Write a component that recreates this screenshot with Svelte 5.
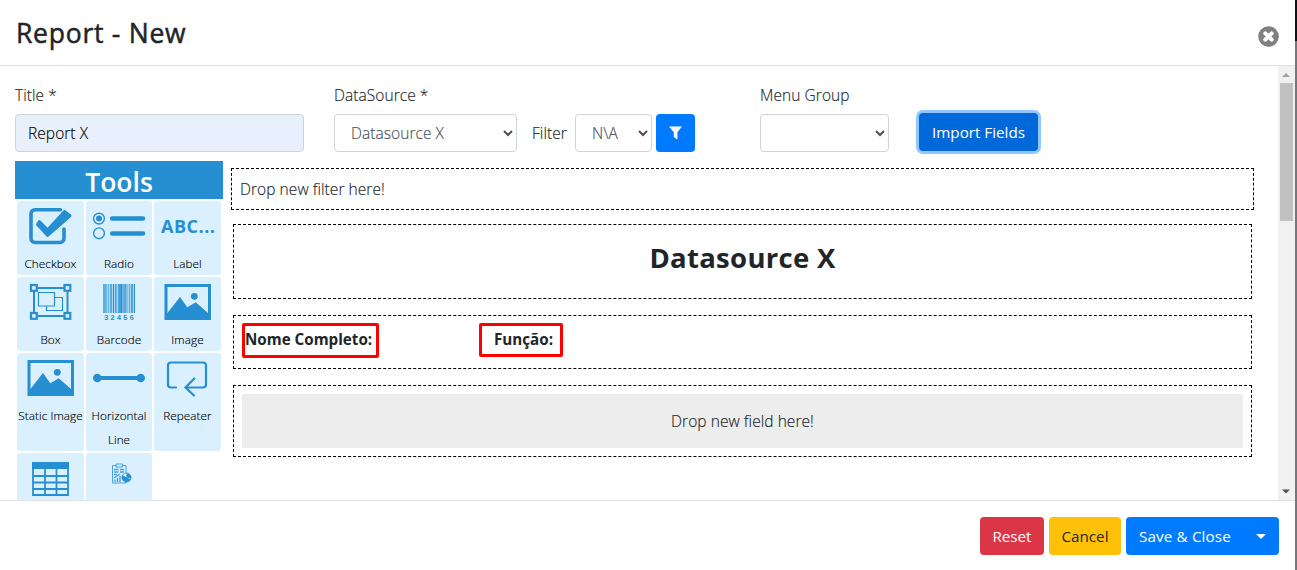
<script>
  const tools = [
    { id: 'check', label: 'Checkbox' },
    { id: 'radio', label: 'Radio' },
    { id: 'label', label: 'Label' },
    { id: 'box', label: 'Box' },
    { id: 'barcode', label: 'Barcode' },
    { id: 'image', label: 'Image' },
    { id: 'image', label: 'Static Image' },
    { id: 'line', label: 'Horizontal Line' },
    { id: 'repeat', label: 'Repeater' },
    { id: 'table' },
    { id: 'report' }
  ];
  const corners = [[14, 8], [47.5, 8], [14, 36], [47.5, 36]];
  const bars = [
    [17, 2, 0.6], [19, 2, 0.5], [22, 1, 0.5], [24, 2, 0.6], [27, 1, 1], [29, 1, 0.7], [30, 1, 0.4],
    [32, 3, 0.75], [35, 1, 1], [36, 2, 0.45], [38, 2, 0.65], [40, 2, 0.3], [43, 1, 0.6], [45, 2, 0.7], [48, 1, 1]
  ];
</script>

<div class="stage">
  <div class="modal">
    <header>
      <h4>Report - New</h4>
      <svg class="close" width="21" height="21" viewBox="0 0 21 21">
        <circle cx="10.5" cy="10.5" r="10.3" fill="#808080" />
        <path d="M7.3 7.3l6.4 6.4M13.7 7.3l-6.4 6.4" stroke="#fff" stroke-width="4" stroke-linecap="round" />
      </svg>
    </header>

    <div class="body">
      <div class="content">
        <div class="form">
          <div class="field title"><span class="lbl">Title *</span><input value="Report X" /></div>
          <div class="field source"><span class="lbl">DataSource *</span><select><option>Datasource X</option></select></div>
          <span class="filter">Filter</span>
          <select class="na"><option>N\A</option></select>
          <button class="btn primary funnel" aria-label="Filter">
            <svg width="13" height="14" viewBox="0 0 13 14"><path d="M0 .5h13L8.4 6.2V13.5L4.8 11V6.2z" fill="#fff" /></svg>
          </button>
          <div class="field group"><span class="lbl">Menu Group</span><select><option></option></select></div>
          <button class="btn import">Import Fields</button>
        </div>

        <div class="work">
          <aside>
            <h3>Tools</h3>
            <div class="tools">
              {#each tools as t}
                <div class="tool">
                  <svg width="67" height="50" viewBox="0 0 67 50" fill="none" stroke="#268fd2">
                    {#if t.id === 'check'}
                      <path d="M43.500 8.700H18a4 4 0 0 0-4 4V37.500a4 4 0 0 0 4 4H43a4 4 0 0 0 4-4V28" stroke-width="3.600" stroke-linecap="round" />
                      <path d="M22.300 20.500L30.700 28.700L47.500 10.500L53 14.800L30.700 34.500L20.500 23.500z" fill="#268fd2" stroke-width="3" stroke-linejoin="round" />
                    {:else if t.id === 'radio'}
                      <circle cx="13" cy="17.600" r="5.400" stroke-width="1.400" />
                      <circle cx="13" cy="17.600" r="3" fill="#268fd2" stroke="none" />
                      <circle cx="13" cy="32.300" r="5.400" stroke-width="1.400" />
                      <path d="M26.200 17.500H57M26.200 32.500H57" stroke-width="4.600" stroke-linecap="round" />
                    {:else if t.id === 'label'}
                      <text class="abc" x="7" y="31.700" textLength="54">ABC...</text>
                    {:else if t.id === 'box'}
                      <path d="M17 11H50.500V39H17z" stroke-width="2" />
                      {#each corners as [x, y]}
                        <rect {x} {y} width="5.800" height="5.800" fill="#daf0ff" stroke-width="2.200" />
                      {/each}
                      <path d="M21.500 15.500h16v13.500h-16zM37.500 20.500h8v13h-16v-4.500" stroke-width="1.200" />
                    {:else if t.id === 'barcode'}
                      <rect x="17" y="7" width="32" height="29" fill="#268fd2" fill-opacity=".25" stroke="none" />
                      {#each bars as [x, w, o]}
                        <rect {x} y="7" width={w} height="29" fill="#268fd2" fill-opacity={o} stroke="none" />
                      {/each}
                      <text class="digits" x="18" y="42.700" textLength="30">32456</text>
                    {:else if t.id === 'image'}
                      <rect x="12" y="8.500" width="43.500" height="33" stroke-width="3" />
                      <circle cx="40.300" cy="19.300" r="3.400" fill="#268fd2" stroke="none" />
                      <path d="M13 36.500L26 20l7.300 10.300 8.400-5L54 36v7H13z" fill="#268fd2" stroke="none" />
                    {:else if t.id === 'line'}
                      <path d="M11 25H55" stroke-width="4" />
                      <circle cx="11.300" cy="25" r="4.300" fill="#268fd2" stroke="none" />
                      <circle cx="54.700" cy="25" r="4.300" fill="#268fd2" stroke="none" />
                    {:else if t.id === 'repeat'}
                      <path d="M22 34.500h-5a3 3 0 0 1-3-3V12.500a3 3 0 0 1 3-3H49a3 3 0 0 1 3 3V31.500a3 3 0 0 1-3 3H32M40.300 25.500L31.500 34.500l8.500 8" stroke-width="2.200" stroke-linecap="round" />
                    {:else if t.id === 'table'}
                      <path d="M16 10H51V42H16zM28 16V42M39.500 16V42M16 23H51M16 29.500H51M16 36H51" stroke-width="1.800" />
                      <rect x="15" y="9" width="37" height="7" fill="#268fd2" stroke="none" />
                    {:else}
                      <path d="M30 12.500h-3.500v17.500H40V12.500h-3.500M30 11h6.500v3H30z" stroke-opacity=".8" />
                      <path d="M28 16.500h4.500M28 19h4.500M28 21.500h3M34 16.500h4M34 19h4M29 29v-2.500M31.500 29v-4M34 29v-6M28 25l6-4" stroke-width="1.400" stroke-opacity=".8" />
                      <circle cx="40.500" cy="24.500" r="4.600" fill="#daf0ff" stroke-opacity=".7" />
                      <path d="M36.500 22l4 2.500 4.300 2A4.700 4.700 0 0 1 36.500 22zM40.500 24.500V20a4.600 4.600 0 0 1 4.500 5.500z" fill="#268fd2" stroke="none" />
                    {/if}
                  </svg>
                  {#if t.label}<span class={t.id}>{t.label}</span>{/if}
                </div>
              {/each}
            </div>
          </aside>

          <section>
            <div class="drop-filter"><span>Drop new filter here!</span></div>
            <div class="band heading"><h3><b>Datasource X</b></h3></div>
            <div class="band fields">
              <div class="cell first"><b>Nome Completo:</b><i class="mark"></i></div>
              <div class="cell second"><b>Função:</b><i class="mark"></i></div>
            </div>
            <div class="band detail"><div class="drop"><span>Drop new field here!</span></div></div>
          </section>
        </div>
      </div>

      <div class="scrollbar">
        <svg width="16" height="17" viewBox="0 0 16 17"><path d="M4 11l4-4 4 4z" fill="#a3a3a3" /></svg>
        <div class="thumb"></div>
        <svg width="16" height="17" viewBox="0 0 16 17"><path d="M4 6.500h8l-4 4z" fill="#505050" /></svg>
      </div>
    </div>

    <footer>
      <button class="btn reset">Reset</button>
      <button class="btn cancel">Cancel</button>
      <button class="btn primary save"><span>Save &amp; Close</span><svg width="10" height="5" viewBox="0 0 10 5"><path d="M0 0h10L5 5z" fill="#fff" /></svg></button>
    </footer>
  </div>
  <div class="behind"></div>
</div>

<style>
  :global(body) { overflow: hidden; background: #fff; }
  * { box-sizing: border-box; }
  .stage {
    display: flex; width: 1297px; height: 570px; background: #fff; color: #212529;
    font: 300 15.500px/24px "Open Sans", sans-serif; letter-spacing: .06px;
    -webkit-text-stroke: .15px;
  }
  .modal { width: 1295px; display: flex; flex-direction: column; }
  .behind { width: 2px; background: linear-gradient(#10121a 41px, #77777a 41px); }
  header {
    height: 66px; padding: 15px 16px 0; display: flex; justify-content: space-between;
    border-bottom: 1px solid #dee2e6;
  }
  h3, h4, b, .btn, text { -webkit-text-stroke: 0; }
  h3, h4 { margin: 0; }
  h4 { font-size: 26.500px; line-height: 36px; font-weight: 400; letter-spacing: .75px; -webkit-text-stroke: .5px; }
  .close { margin-top: 11px; }
  .body { height: 434px; display: flex; overflow: hidden; }
  .content { width: 1278px; padding: 16px 0 0 15px; overflow: hidden; }
  .form { display: flex; align-items: flex-end; height: 70px; }
  .field { display: flex; flex-direction: column; gap: 7px; }
  .lbl { height: 24px; white-space: nowrap; }
  input, select {
    width: 100%; height: 38px; border: 1px solid #ced4da; border-radius: 4px; background: #fff;
    padding: 6px 12px; font: inherit; color: #495057; letter-spacing: inherit;
  }
  input { background: #e8f0fe; color: #000; }
  .title { width: 289px; margin-right: 30px; }
  .source { width: 183px; }
  .filter { width: 35px; margin: 0 8px 7px 15px; white-space: nowrap; }
  .na { width: 77px; margin-right: 4px; }
  .group { width: 129px; margin: 0 30px 0 65px; }
  .btn {
    height: 38px; border: 0; border-radius: 4px; padding: 0; color: #fff;
    font: 400 15.200px/24px "Open Sans", sans-serif; white-space: nowrap;
  }
  .primary { background: #007bff; }
  .funnel { width: 39px; display: flex; align-items: center; justify-content: center; }
  .import { width: 119px; margin-bottom: 1px; background: #0069d9; box-shadow: 0 0 0 3px #93c6ff; }
  .work { display: flex; padding-top: 9px; }
  aside { width: 208px; margin-right: 8px; }
  aside h3 {
    height: 38px; line-height: 42px; background: #268fd2; color: #fff; text-align: center;
    font-size: 26.500px; font-weight: 600; letter-spacing: 0;
  }
  .tools { display: grid; grid-template-columns: 67px 66px 67px; gap: 2px; padding: 2px; }
  .tool {
    min-height: 74px; background: #daf0ff; border-radius: 3px; color: #000; text-align: center;
    font-size: 11.700px; overflow: hidden; display: flex; flex-direction: column; align-items: center;
  }
  .tool svg { flex: none; }
  .tool span { margin: 0 -4px; }
  .tool span.line { width: 62px; }
  .abc { font: 700 18px "Open Sans", sans-serif; fill: #268fd2; stroke: none; }
  .digits { font: bold 7.500px "Liberation Mono", monospace; fill: #268fd2; stroke: none; }
  section { width: 1023px; padding-top: 7px; }
  .drop-filter { height: 42px; border: 1px dashed #000; padding: 8px; }
  .band { margin: 0 2px 16px; border: 1px dashed #000; }
  .heading { height: 75px; margin-top: 14px; text-align: center; }
  .heading h3 { font-size: 27.500px; letter-spacing: .3px; line-height: 34px; padding-top: 16px; }
  .heading b, .fields b { font-weight: 700; }
  .fields { height: 54px; padding: 7px 8px; display: flex; }
  .cell { position: relative; height: 35px; padding-top: 4px; white-space: nowrap; font-size: 15.200px; letter-spacing: 0; }
  .first { width: 137px; padding-left: 3px; margin-right: 100px; }
  .second { width: 84px; height: 34px; padding-left: 15px; }
  .mark { position: absolute; inset: 0; border: 3px solid #f00; border-radius: 2px; }
  .detail { height: 72px; padding: 8px; }
  .drop { height: 54px; background: #ededed; text-align: center; line-height: 54px; }
  .scrollbar { width: 17px; background: #f1f1f1; display: flex; flex-direction: column; }
  .thumb { width: 13px; height: 138px; margin: 0 2px auto; background: #c1c1c1; }
  footer {
    height: 70px; border-top: 1px solid #dee2e6; padding: 16px 16px 0 0;
    display: flex; justify-content: flex-end; gap: 5px;
  }
  .reset { width: 64px; background: #dc3545; }
  .cancel { width: 72px; background: #ffc107; color: #212529; }
  .save { width: 153px; display: flex; align-items: center; justify-content: space-between; padding: 0 13px; letter-spacing: .15px; }
</style>
